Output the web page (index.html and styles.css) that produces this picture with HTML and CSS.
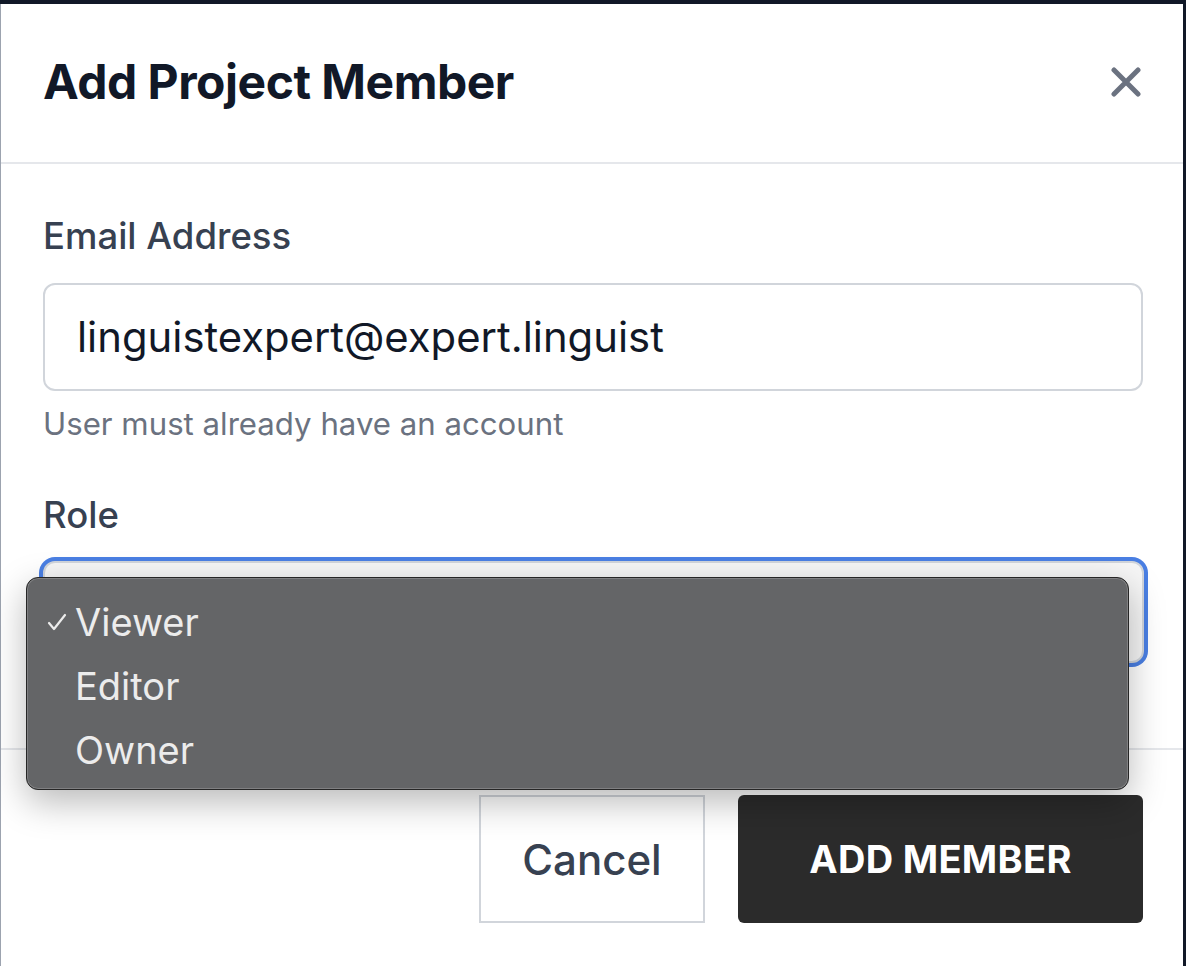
FILE: index.html
```html
<!DOCTYPE html>
<html lang="en">
<head>
<meta charset="utf-8">
<title>Add Project Member</title>
<link rel="stylesheet" href="styles.css">
</head>
<body>
<div class="modal">
  <header class="modal-header">
    <h2 class="modal-title">Add Project Member</h2>
    <button class="close-btn" aria-label="Close">
      <svg width="30" height="30" viewBox="0 0 30 30"><path d="M3 3L27 27M27 3L3 27" stroke="#6b7280" stroke-width="5" stroke-linecap="round"/></svg>
    </button>
  </header>
  <div class="modal-body">
    <label class="field-label">Email Address</label>
    <div class="text-input">linguistexpert@expert.linguist</div>
    <p class="hint">User must already have an account</p>
    <label class="field-label role-label">Role</label>
    <div class="select-wrap">
      <div class="select-box" aria-label="Viewer">
        <svg class="chev" width="16" height="16" viewBox="0 0 16 16"><path d="M4 6l4 4 4-4" stroke="#111" stroke-width="2" fill="none"/></svg>
      </div>
      <ul class="dropdown">
        <li class="opt"><span class="check"><svg width="20" height="18" viewBox="0 0 20 18"><path d="M2 10l5 6L18 2" stroke="#ececec" stroke-width="2.2" fill="none" stroke-linecap="round" stroke-linejoin="round"/></svg></span>Viewer</li>
        <li class="opt"><span class="check"></span>Editor</li>
        <li class="opt"><span class="check"></span>Owner</li>
      </ul>
    </div>
  </div>
  <footer class="modal-footer">
    <button class="btn btn-cancel">Cancel</button>
    <button class="btn btn-primary">ADD MEMBER</button>
  </footer>
</div>
</body>
</html>
```

FILE: styles.css
```css
html, body {
  margin: 0;
  padding: 0;
  background: #111827;
  height: 100%;
  overflow: hidden;
}
body {
  font-family: Inter, "Noto Sans", sans-serif;
}
.modal {
  margin-top: 4px;
  width: 1183px;
  height: 1000px;
  background: #ffffff;
  border-left: 1px solid #9ca3af;
  box-sizing: border-box;
}
.modal-header {
  height: 160px;
  box-sizing: border-box;
  border-bottom: 2px solid #e5e7eb;
  display: flex;
  align-items: center;
  justify-content: space-between;
  padding: 0 42px 0 42px;
}
.modal-title {
  margin: 0;
  font-size: 48px;
  font-weight: 700;
  color: #111827;
  letter-spacing: -0.5px;
  padding-bottom: 4px;
}
.close-btn {
  background: none;
  border: 0;
  padding: 0;
  width: 30px;
  height: 30px;
  display: flex;
  margin-bottom: 2px;
}
.modal-body {
  padding: 48px 40px 85px 42px;
  border-bottom: 2px solid #e5e7eb;
  display: flex;
  flex-direction: column;
}
.field-label {
  font-size: 36.5px;
  font-weight: 500;
  color: #374151;
  line-height: 48px;
}
.text-input {
  margin-top: 23px;
  height: 108px;
  box-sizing: border-box;
  border: 2px solid #d1d5db;
  border-radius: 12px;
  padding-left: 32px;
  display: flex;
  align-items: center;
  font-size: 41.8px;
  color: #111827;
}
.hint {
  margin: 13px 0 0;
  font-size: 31.2px;
  line-height: 40px;
  color: #6b7280;
}
.role-label {
  margin-top: 47px;
}
.select-wrap {
  margin-top: 22px;
  margin-right: -1px;
  position: relative;
}
.select-box {
  height: 102px;
  box-sizing: border-box;
  border: 2px solid #d1d5db;
  border-radius: 12px;
  box-shadow: 0 0 0 4px #4a7fe3;
  background: #f6f6f6;
  display: flex;
  align-items: center;
  justify-content: flex-end;
  padding: 0 12px 0 33px;
}
.chev {
  margin-top: -10px;
}
.dropdown {
  position: absolute;
  left: -17px;
  top: 16px;
  width: 1103px;
  height: 213px;
  box-sizing: border-box;
  margin: 0;
  padding: 12px 0 0;
  list-style: none;
  background: #646567;
  border: 1px solid #262626;
  border-radius: 12px;
  box-shadow: inset 0 0 0 1px rgba(255,255,255,0.18), 0 12px 36px rgba(0,0,0,0.28);
}
.opt {
  height: 64px;
  display: flex;
  align-items: center;
  font-size: 38px;
  color: #ececec;
}
.check {
  width: 28px;
  padding-left: 20px;
  display: flex;
  align-items: center;
}
.modal-footer {
  display: flex;
  justify-content: flex-end;
  gap: 33px;
  padding: 45px 40px 0 0;
}
.btn {
  height: 128px;
  box-sizing: border-box;
  font-family: Inter, "Noto Sans", sans-serif;
  cursor: pointer;
}
.btn-cancel {
  width: 226px;
  background: #ffffff;
  border: 2px solid #d1d5db;
  border-radius: 0;
  font-size: 42px;
  font-weight: 500;
  color: #374151;
}
.btn-primary {
  width: 405px;
  background: #2b2b2b;
  border: 0;
  border-radius: 6px;
  font-size: 38px;
  font-weight: 700;
  color: #ffffff;
  letter-spacing: 0.3px;
}
```
